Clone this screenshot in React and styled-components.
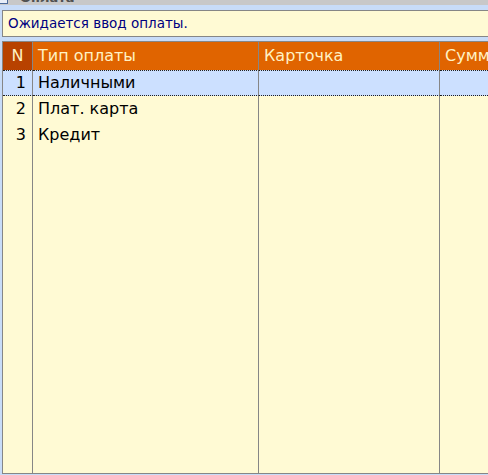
import React from 'react'
import styled, { createGlobalStyle } from 'styled-components'

const GlobalStyle = createGlobalStyle`
  html, body {
    margin: 0;
    padding: 0;
    background: #c8dcf8;
  }
  body {
    font-family: "DejaVu Sans", "Liberation Sans", sans-serif;
  }
`

const Window = styled.div`
  width: 488px;
  height: 475px;
  display: flex;
  flex-direction: column;
  overflow: hidden;
  background: #c8dcf8;
`

const TitleBar = styled.div`
  height: 5px;
  flex: none;
  background: #c8c8c8;
  display: flex;
  align-items: flex-end;
  gap: 12px;
  overflow: hidden;
`

const TitleIcon = styled.svg`
  flex: none;
  margin-left: -1px;
  margin-bottom: 1px;
`

const TitleText = styled.span`
  font-size: 13px;
  font-weight: bold;
  line-height: 13px;
  color: #505050;
  margin-bottom: 1px;
`

const Body = styled.div`
  flex: 1;
  width: 540px;
  padding: 5px 0 1px 2px;
  display: flex;
  flex-direction: column;
  gap: 4px;
  min-height: 0;
`

const Message = styled.div`
  height: 25px;
  flex: none;
  border: 1px solid #868686;
  border-right: none;
  background: #fffad4;
  color: #000080;
  font-size: 13.5px;
  line-height: 25px;
  padding-left: 5px;
`

const Grid = styled.div`
  flex: 1;
  min-height: 0;
  border: 1px solid #868686;
  border-right: none;
  background: #fffad4;
  display: grid;
  grid-template-columns: 30px 226px 181px 1fr;
  grid-template-rows: 28px repeat(3, 26px) 1fr;
`

const HeadCell = styled.div`
  background: ${p => (p.$dark ? '#b84200' : '#e06400')};
  color: #fff2c4;
  font-size: 16px;
  line-height: 28px;
  padding-left: ${p => (p.$dark ? '0' : '5px')};
  text-align: ${p => (p.$dark ? 'center' : 'left')};
  border-right: 1px solid #868686;
  white-space: nowrap;
  overflow: hidden;
`

const Cell = styled.div`
  font-size: 16px;
  line-height: 26px;
  color: #000;
  background: ${p => (p.$selected ? '#cce0ff' : 'transparent')};
  border-right: 1px solid #868686;
  padding: ${p => (p.$num ? '0 6px 0 0' : '0 0 0 5px')};
  text-align: ${p => (p.$num ? 'right' : 'left')};
  white-space: nowrap;
  overflow: hidden;
  box-sizing: border-box;
  ${p =>
    p.$selected &&
    `
    border-top: 1px dotted #202020;
    border-bottom: 1px dotted #202020;
    line-height: 24px;
  `}
`

const Filler = styled.div`
  border-right: 1px solid #868686;
`

const rows = ['Наличными', 'Плат. карта', 'Кредит']

export default function App() {
  return (
    <Window>
      <GlobalStyle />
      <TitleBar>
        <TitleIcon width="9" height="9" viewBox="0 0 9 9">
          <rect x="0.5" y="0.5" width="8" height="8" fill="#e8eef8" stroke="#4a6a9a" />
          <rect x="1" y="1" width="7" height="2" fill="#3a6ab0" />
        </TitleIcon>
        <TitleText>Оплата</TitleText>
      </TitleBar>
      <Body>
        <Message>Ожидается ввод оплаты.</Message>
        <Grid>
          <HeadCell $dark>N</HeadCell>
          <HeadCell>Тип оплаты</HeadCell>
          <HeadCell>Карточка</HeadCell>
          <HeadCell>Сумма</HeadCell>
          {rows.map((name, i) => (
            <React.Fragment key={name}>
              <Cell $num $selected={i === 0}>{i + 1}</Cell>
              <Cell $selected={i === 0}>{name}</Cell>
              <Cell $selected={i === 0} />
              <Cell $selected={i === 0} />
            </React.Fragment>
          ))}
          <Filler />
          <Filler />
          <Filler />
          <Filler />
        </Grid>
      </Body>
    </Window>
  )
}
